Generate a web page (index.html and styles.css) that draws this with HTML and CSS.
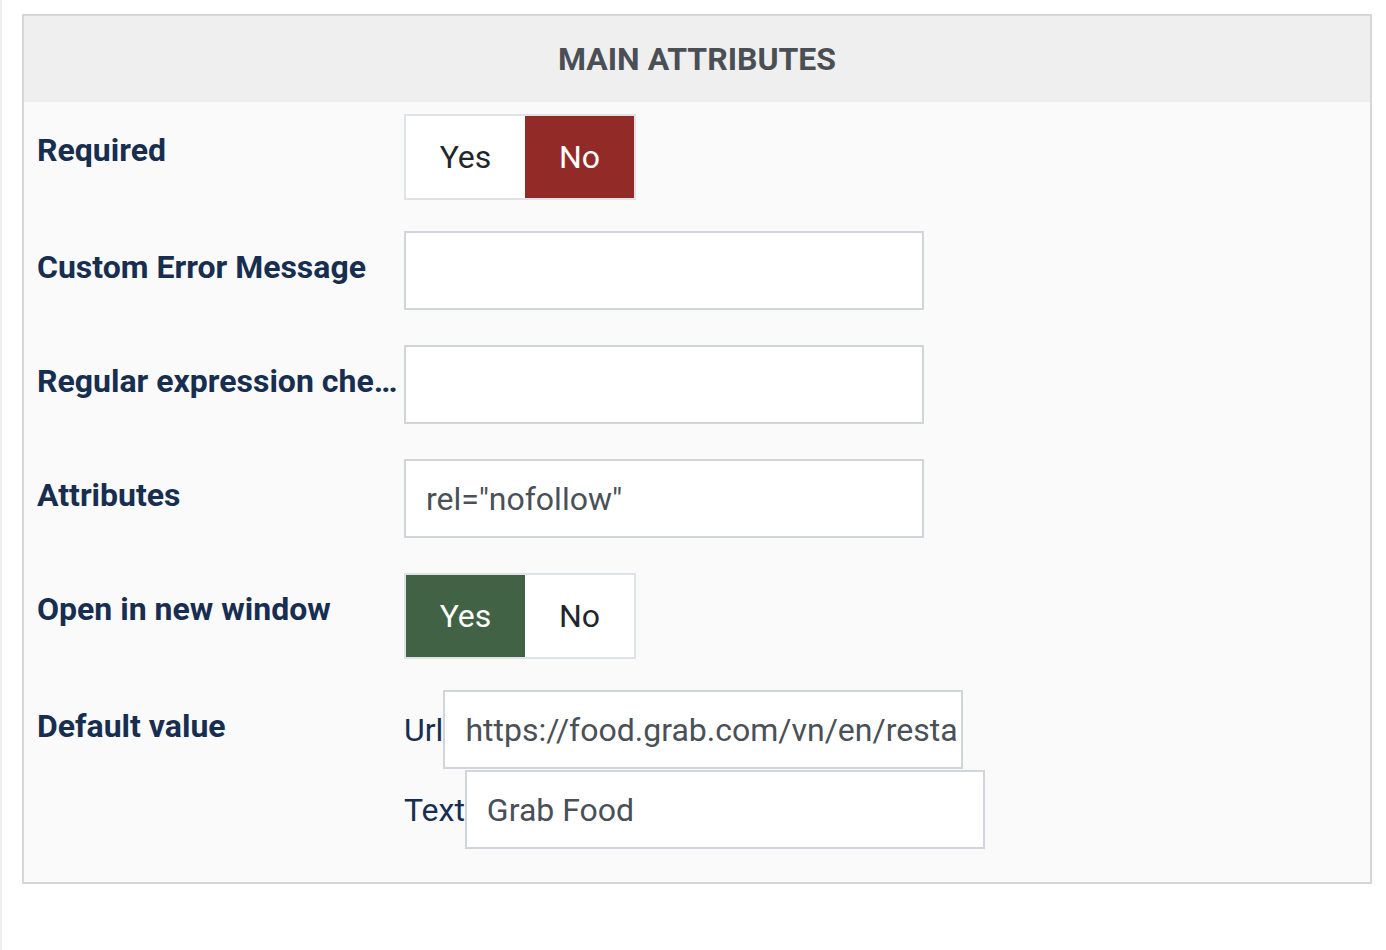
FILE: index.html
```html
<!DOCTYPE html>
<html lang="en">
<head>
  <meta charset="UTF-8" />
  <title>Main attributes</title>
  <link rel="stylesheet" href="styles.css">
</head>
<body>
  <div class="page">
    <fieldset class="panel">
      <div class="panel-head">MAIN ATTRIBUTES</div>
      <div class="panel-body">

        <div class="field field-toggle">
          <label class="field-label">Required</label>
          <div class="switch">
            <span class="switch-opt">Yes</span>
            <span class="switch-opt is-no active">No</span>
          </div>
        </div>

        <div class="field">
          <label class="field-label">Custom Error Message</label>
          <input class="text-input" type="text" value="">
        </div>

        <div class="field">
          <label class="field-label" title="Regular expression check">Regular expression check</label>
          <input class="text-input" type="text" value="">
        </div>

        <div class="field">
          <label class="field-label">Attributes</label>
          <input class="text-input" type="text" value='rel="nofollow"'>
        </div>

        <div class="field field-toggle">
          <label class="field-label">Open in new window</label>
          <div class="switch">
            <span class="switch-opt is-yes active">Yes</span>
            <span class="switch-opt">No</span>
          </div>
        </div>

        <div class="field field-last">
          <label class="field-label">Default value</label>
          <div class="sub-fields">
            <div class="sub-row">
              <span class="sub-label">Url</span>
              <input class="text-input" type="text" value="https://food.grab.com/vn/en/restaurant/">
            </div>
            <div class="sub-row">
              <span class="sub-label">Text</span>
              <input class="text-input" type="text" value="Grab Food">
            </div>
          </div>
        </div>

      </div>
    </fieldset>
  </div>
</body>
</html>
```

FILE: styles.css
```css
body {
  margin: 0;
  background: #fff;
  font-family: Roboto, "Noto Sans", sans-serif;
}
.page {
  border-left: 2px solid #eef0f3;
  min-height: 950px;
  box-sizing: border-box;
  padding: 14px 14px 0 20px;
}
.panel {
  margin: 0;
  padding: 0;
  width: 1350px;
  box-sizing: border-box;
  border: 2px solid #d6d6d6;
  background: #fafafa;
}
.panel-head {
  background: #efefef;
  height: 86px;
  line-height: 86px;
  text-align: center;
  font-size: 32px;
  font-weight: 700;
  color: #4a4f55;
}
.panel-body {
  padding: 12px 0 33px 13px;
}
.field {
  display: flex;
  align-items: flex-start;
  margin-bottom: 35px;
}
.field-toggle {
  margin-bottom: 31px;
}
.field-last {
  margin-bottom: 0;
}
.field-label {
  width: 367px;
  flex: none;
  padding: 14px 6px 0 0;
  box-sizing: border-box;
  font-size: 32px;
  line-height: 44px;
  font-weight: 700;
  color: #182e50;
  white-space: nowrap;
  overflow: hidden;
  text-overflow: ellipsis;
}
.switch {
  display: flex;
  border: 2px solid #dfe3e8;
  background: #fff;
  height: 82px;
}
.switch-opt {
  display: flex;
  align-items: center;
  justify-content: center;
  font-size: 32px;
  color: #22262a;
  width: 109px;
}
.switch-opt:first-child {
  width: 119px;
}
.switch-opt.active {
  color: #fff;
}
.is-no.active {
  background: #922b27;
}
.is-yes.active {
  background: #416245;
}
.text-input {
  width: 520px;
  height: 79px;
  box-sizing: border-box;
  border: 2px solid #d1d5da;
  background: #fff;
  padding: 0 2px 0 20px;
  font-family: inherit;
  font-size: 32px;
  color: #4a5057;
  margin: 0;
  outline: none;
}
.sub-fields {
  display: flex;
  flex-direction: column;
  gap: 1px;
}
.sub-row {
  display: flex;
  align-items: center;
}
.sub-label {
  font-size: 32px;
  color: #182e50;
}
```
